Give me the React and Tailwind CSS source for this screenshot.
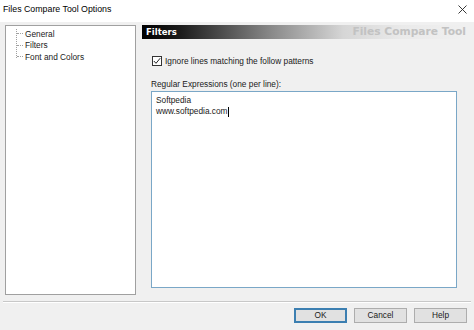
export default function App() {
  return (
    <div className="w-[474px] h-[330px] bg-[#f0f0f0] flex flex-col overflow-hidden text-[8.3px] text-[#1a1a1a]" style={{ fontFamily: '"Liberation Sans", Arial, sans-serif' }}>
      {/* title bar */}
      <div className="h-[22px] bg-white flex items-center justify-between pl-[3px] pr-[7px] shrink-0">
        <span className="text-[8.8px] text-black mt-[-2px]">Files Compare Tool Options</span>
        <svg width="9" height="9" viewBox="0 0 9 9" className="mt-[-3px]">
          <path d="M0.5 0.5L8.5 8.5M8.5 0.5L0.5 8.5" stroke="#222" strokeWidth="0.9" />
        </svg>
      </div>

      {/* body */}
      <div className="flex gap-[6px] pl-[5px] pt-[3px] h-[275px] shrink-0">
        {/* tree */}
        <div className="w-[131px] h-[270px] bg-white border border-[#a0a0a0] relative shrink-0">
          <div className="absolute left-[10px] top-[3px] w-px h-[29px] border-l border-dotted border-[#a0a0a0]" />
          <div className="flex flex-col pt-[2px]">
            {["General", "Filters", "Font and Colors"].map((t) => (
              <div key={t} className="flex items-center h-[11.5px]">
                <div className="w-[6px] ml-[11px] border-t border-dotted border-[#a0a0a0]" />
                <span className="ml-[2px] leading-none">{t}</span>
              </div>
            ))}
          </div>
        </div>

        {/* right panel */}
        <div className="flex flex-col w-[325px]">
          <div className="h-[14px] flex items-center justify-between pl-[4px] pr-[1px] bg-[linear-gradient(to_right,#000000_0%,#1c1c1c_12%,#8a8a8a_40%,#d6d6d6_62%,#eaeaea_80%,#f0f0f0_100%)]">
            <span className="text-white font-bold text-[8.5px] leading-none" style={{ fontFamily: '"DejaVu Sans", Verdana, sans-serif' }}>Filters</span>
            <span className="text-[#c2c2c2] font-bold text-[10.7px] leading-none" style={{ fontFamily: '"DejaVu Sans", Verdana, sans-serif' }}>Files Compare Tool</span>
          </div>

          <div className="flex items-center mt-[17px] ml-[10px]">
            <div className="w-[10px] h-[10px] bg-white border border-[#333] flex items-center justify-center">
              <svg width="8" height="8" viewBox="0 0 8 8">
                <path d="M0.8 4L3 6.3L7.2 1.2" stroke="#222" strokeWidth="1" fill="none" />
              </svg>
            </div>
            <span className="ml-[3px] leading-none">Ignore lines matching the follow patterns</span>
          </div>

          <div className="mt-[14px] ml-[9px] leading-none">Regular Expressions (one per line):</div>

          <div className="mt-[3px] ml-[9px] w-[306px] h-[197px] bg-white border border-[#7aa7c7] pl-[4px] pt-[3px] leading-[11px]">
            <div>Softpedia</div>
            <div className="flex items-center">
              www.softpedia.com<span className="inline-block w-px h-[10px] bg-black ml-px" />
            </div>
          </div>
        </div>
      </div>

      {/* separator */}
      <div className="mx-[3px] mt-[4px] border-t border-[#c8c8c8] border-b-white border-b" />

      {/* buttons */}
      <div className="flex justify-end gap-[7px] pr-[7px] mt-[5px]">
        <button className="w-[53px] h-[15px] bg-[#e1e1e1] border-2 border-[#3c7fb1] text-[8.3px] leading-none">OK</button>
        <button className="w-[53px] h-[15px] bg-[#e1e1e1] border border-[#adadad] text-[8.3px] leading-none">Cancel</button>
        <button className="w-[53px] h-[15px] bg-[#e1e1e1] border border-[#adadad] text-[8.3px] leading-none">Help</button>
      </div>
    </div>
  );
}
